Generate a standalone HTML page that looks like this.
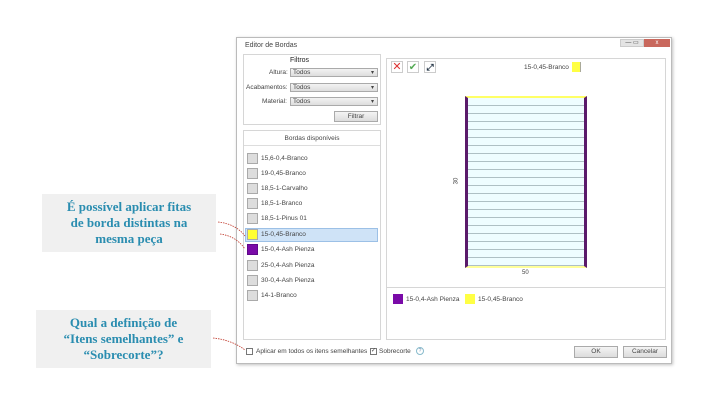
<!DOCTYPE html>
<html><head><meta charset="utf-8"><style>
*{margin:0;padding:0;box-sizing:border-box}
body{width:720px;height:405px;background:#fff;position:relative;overflow:hidden;font-family:"Liberation Sans",sans-serif;font-size:7px;color:#444}
.a{position:absolute}
.dlg{left:236px;top:37px;width:436px;height:327px;border:1px solid #bbb;background:#fff;box-shadow:1px 1px 3px rgba(0,0,0,.25)}
.box{border:1px solid #d6d6d6;background:#fff}
.sel{border:1px solid #aaa;background:linear-gradient(#f2f2f2,#ddd);height:9px;font-size:6.5px;padding-left:3px;line-height:8px}
.sel:after{content:"▾";position:absolute;right:3px;top:0;font-size:6px}
.sw{width:11px;height:11px;border:1px solid #aaa;background:#ddd}
.it{left:247px;height:12px;font-size:6.5px;line-height:12px;width:131px}
.it .sw{position:absolute;left:0;top:0}
.it span{position:absolute;left:14px}
.call{background:#f0f0f0;color:#2a8db0;font-family:"Liberation Serif",serif;font-weight:bold;font-size:13px;text-align:center;line-height:16px}
.btn{border:1px solid #aaa;background:linear-gradient(#f4f4f4,#dcdcdc);font-size:6.5px;text-align:center;line-height:10px}
</style></head><body>
<div class="a call" style="left:42px;top:194px;width:174px;height:58px;padding-top:5px">É possível aplicar fitas<br>de borda distintas na<br>mesma peça</div>
<div class="a call" style="left:36px;top:310px;width:175px;height:58px;padding-top:5px">Qual a definição de<br>“Itens semelhantes” e<br>“Sobrecorte”?</div>
<div class="a dlg"></div>
<div class="a" style="left:245px;top:42px;font-size:7px">Editor de Bordas</div>
<div class="a" style="left:620px;top:39px;width:24px;height:8px;background:#e4e4e4;border:1px solid #ccc;font-size:6px;text-align:center;line-height:6px">— ▭</div>
<div class="a" style="left:644px;top:39px;width:26px;height:8px;background:#c9685d;color:#fff;font-size:6px;text-align:center;line-height:8px">x</div>
<div class="a box" style="left:243px;top:54px;width:138px;height:71px"></div>
<div class="a" style="left:290px;top:57px;font-size:7px;color:#222">Filtros</div>
<div class="a" style="left:269px;top:69px;font-size:6.5px">Altura:</div>
<div class="a sel" style="left:290px;top:68px;width:88px"></div><div class="a" style="left:293px;top:69px;font-size:6.5px">Todos</div>
<div class="a" style="left:246px;top:84px;font-size:6.5px">Acabamentos:</div>
<div class="a sel" style="left:290px;top:83px;width:88px"></div><div class="a" style="left:293px;top:84px;font-size:6.5px">Todos</div>
<div class="a" style="left:262px;top:98px;font-size:6.5px">Material:</div>
<div class="a sel" style="left:290px;top:97px;width:88px"></div><div class="a" style="left:293px;top:98px;font-size:6.5px">Todos</div>
<div class="a btn" style="left:334px;top:111px;width:44px;height:11px">Filtrar</div>
<div class="a box" style="left:243px;top:130px;width:138px;height:210px"></div>
<div class="a" style="left:244px;top:131px;width:136px;height:15px;border-bottom:1px solid #ddd;text-align:center;font-size:6.5px;line-height:15px">Bordas disponíveis</div>
<div class="a it" style="top:153px"><div class="sw"></div><span>15,6-0,4-Branco</span></div>
<div class="a it" style="top:168px"><div class="sw"></div><span>19-0,45-Branco</span></div>
<div class="a it" style="top:183px"><div class="sw"></div><span>18,5-1-Carvalho</span></div>
<div class="a it" style="top:198px"><div class="sw"></div><span>18,5-1-Branco</span></div>
<div class="a it" style="top:213px"><div class="sw"></div><span>18,5-1-Pinus 01</span></div>
<div class="a" style="left:245px;top:228px;width:133px;height:14px;background:#cfe3f7;border:1px solid #9cc0e6"></div>
<div class="a it" style="top:229px"><div class="sw" style="background:#ffff33"></div><span>15-0,45-Branco</span></div>
<div class="a it" style="top:244px"><div class="sw" style="background:#7a0aa8;border-color:#60088a"></div><span>15-0,4-Ash Pienza</span></div>
<div class="a it" style="top:260px"><div class="sw"></div><span>25-0,4-Ash Pienza</span></div>
<div class="a it" style="top:275px"><div class="sw"></div><span>30-0,4-Ash Pienza</span></div>
<div class="a it" style="top:290px"><div class="sw"></div><span>14-1-Branco</span></div>
<div class="a box" style="left:386px;top:58px;width:280px;height:230px"></div>
<div class="a box" style="left:386px;top:287px;width:280px;height:53px"></div>
<div class="a" style="left:391px;top:61px;width:12px;height:12px;border:1px solid #ccc;color:#d33;font-size:11px;line-height:10px;text-align:center">✕</div>
<div class="a" style="left:407px;top:61px;width:12px;height:12px;border:1px solid #ccc;color:#5a5;font-size:10px;line-height:11px;text-align:center">✔</div>
<div class="a" style="left:424px;top:61px;width:12px;height:12px;border:1px solid #ccc;color:#234;font-size:9px;line-height:11px;text-align:center;font-weight:bold">⤢</div>
<div class="a" style="left:524px;top:64px;font-size:6.5px">15-0,45-Branco</div>
<div class="a" style="left:572px;top:62px;width:9px;height:10px;background:#ffff44;border-right:1px solid #aa9"></div>
<div class="a" style="left:465px;top:96px;width:122px;height:172px;background:repeating-linear-gradient(#eefdff 0 7px,#aec0c4 7px 8px);border-left:3px solid #5a1a6a;border-right:3px solid #5a1a6a;border-top:2px solid #ffff66;border-bottom:2px solid #ffff99"></div>
<div class="a" style="left:453px;top:178px;font-size:6px;transform:rotate(-90deg)">30</div>
<div class="a" style="left:522px;top:270px;font-size:6px">50</div>
<div class="a sw" style="left:393px;top:294px;width:10px;height:10px;background:#7a0aa8;border:none"></div>
<div class="a" style="left:406px;top:296px;font-size:6.5px">15-0,4-Ash Pienza</div>
<div class="a sw" style="left:465px;top:294px;width:10px;height:10px;background:#ffff44;border:none"></div>
<div class="a" style="left:478px;top:296px;font-size:6.5px">15-0,45-Branco</div>
<div class="a" style="left:246px;top:348px;width:7px;height:7px;border:1px solid #777"></div>
<div class="a" style="left:256px;top:348px;font-size:6.5px">Aplicar em todos os itens semelhantes</div>
<div class="a" style="left:370px;top:348px;width:7px;height:7px;border:1px solid #777;font-size:6px;line-height:5px">✓</div>
<div class="a" style="left:379px;top:348px;font-size:6.5px">Sobrecorte</div>
<div class="a" style="left:416px;top:347px;width:8px;height:8px;border:1px solid #8bc;border-radius:50%;font-size:5px;text-align:center;color:#68a;line-height:6px">?</div>
<div class="a btn" style="left:574px;top:346px;width:44px;height:12px">OK</div>
<div class="a btn" style="left:623px;top:346px;width:44px;height:12px">Cancelar</div>
<svg class="a" style="left:0;top:0" width="720" height="405"><g stroke="#c0392b" stroke-width="0.8" stroke-dasharray="1.5 1" fill="none"><path d="M218 222 Q236 224 245 236"/><path d="M220 234 Q236 236 245 249"/><path d="M213 338 Q232 340 245 350"/></g></svg>
</body></html>
